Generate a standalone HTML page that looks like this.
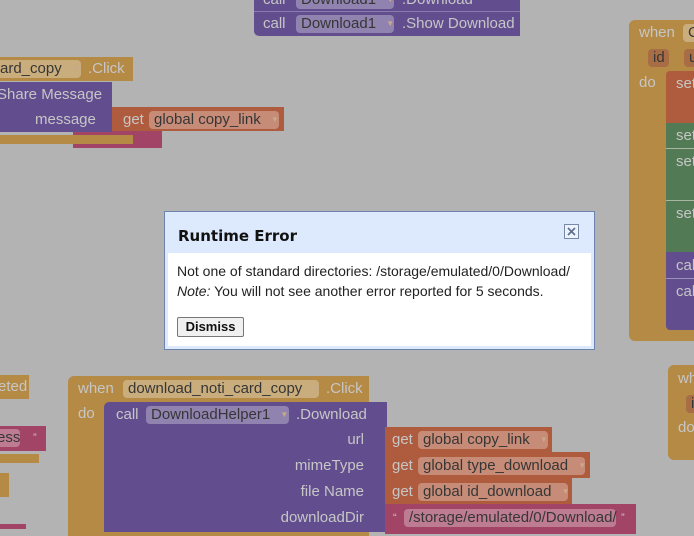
<!DOCTYPE html>
<html><head><meta charset="utf-8"><style>
*{margin:0;padding:0;box-sizing:border-box}
body{width:694px;height:529px;background:#b3b3b3;position:relative;overflow:hidden;font-family:"Liberation Sans",sans-serif;font-size:15px;color:#c6c6c6}
.b{position:absolute}
.g{background:#b48a45}.p{background:#624e8e}.o{background:#ae5b3e}.k{background:#a24465}.n{background:#527a55}
.t{position:absolute;white-space:nowrap;line-height:18px}
.f{position:absolute;background:rgba(255,255,255,.3);border-radius:4px;color:#363636;height:18px;line-height:18px;padding-left:5px;white-space:nowrap}
.f i{font-style:normal;font-size:8px;color:#c9a98a;margin-left:6px;vertical-align:2px}
</style></head><body>
<!-- top purple -->
<div class="b p" style="left:254px;top:0;width:266px;height:36px;border-radius:0 0 0 5px"></div>
<div class="t" style="left:263px;top:-9px">call</div>
<div class="f" style="left:296px;top:-9px;width:98px">Download1 <i>▼</i></div>
<div class="t" style="left:402px;top:-9px">.Download</div>
<div class="b" style="left:254px;top:11px;width:266px;height:1px;background:#8a7cac"></div>
<div class="t" style="left:263px;top:15px">call</div>
<div class="f" style="left:296px;top:15px;width:98px">Download1 <i>▼</i></div>
<div class="t" style="left:402px;top:15px">.Show Download</div>

<!-- left top -->
<div class="b g" style="left:0;top:57px;width:133px;height:24px"></div>
<div class="f" style="left:-5px;top:60px;width:86px">ard_copy <i>▼</i></div>
<div class="t" style="left:88px;top:60px">.Click</div>
<div class="b k" style="left:73px;top:128px;width:89px;height:20px"></div>
<div class="b p" style="left:0;top:82px;width:112px;height:50px"></div>
<div class="t" style="left:-3px;top:86px">Share Message</div>
<div class="t" style="left:35px;top:111px">message</div>
<div class="b o" style="left:112px;top:107px;width:172px;height:24px"></div>
<div class="t" style="left:123px;top:111px">get</div>
<div class="f" style="left:149px;top:111px;width:130px">global copy_link <i>▼</i></div>
<div class="b g" style="left:0;top:135px;width:133px;height:9px"></div>

<!-- right big -->
<div class="b g" style="left:629px;top:20px;width:80px;height:321px;border-radius:6px"></div>
<div class="t" style="left:639px;top:24px">when</div>
<div class="f" style="left:683px;top:24px;width:30px">C</div>
<div class="f" style="left:648px;top:49px;width:21px;background:rgba(160,90,70,.6)">id</div>
<div class="f" style="left:684px;top:49px;width:20px;background:rgba(160,90,70,.6)">u</div>
<div class="t" style="left:639px;top:74px">do</div>
<div class="b o" style="left:666px;top:71px;width:40px;height:52px;border-radius:4px 0 0 0"></div>
<div class="b n" style="left:666px;top:123px;width:40px;height:129px"></div>
<div class="b p" style="left:666px;top:252px;width:40px;height:78px;border-radius:0 0 0 4px"></div>
<div class="b" style="left:666px;top:148px;width:40px;height:1px;background:#a7b7a3"></div>
<div class="b" style="left:666px;top:200px;width:40px;height:1px;background:#a7b7a3"></div>
<div class="b" style="left:666px;top:278px;width:40px;height:1px;background:#9a90b8"></div>
<div class="t" style="left:676px;top:75px">set</div>
<div class="t" style="left:676px;top:127px">set</div>
<div class="t" style="left:676px;top:153px">set</div>
<div class="t" style="left:676px;top:205px">set</div>
<div class="t" style="left:676px;top:257px">cal</div>
<div class="t" style="left:676px;top:283px">cal</div>
<div class="b g" style="left:668px;top:365px;width:40px;height:95px;border-radius:6px"></div>
<div class="t" style="left:678px;top:370px">wh</div>
<div class="f" style="left:686px;top:395px;width:20px;background:rgba(160,90,70,.6)">i</div>
<div class="t" style="left:678px;top:419px">do</div>

<!-- left bottom -->
<div class="b g" style="left:0;top:375px;width:29px;height:24px"></div>
<div class="t" style="left:-2px;top:378px">eted</div>
<div class="b k" style="left:0;top:426px;width:46px;height:25px"></div>
<div class="f" style="left:-8px;top:429px;width:28px">ess</div>
<div class="t" style="left:33px;top:429px;font-size:11px">”</div>
<div class="b g" style="left:0;top:454px;width:39px;height:9px"></div>
<div class="b g" style="left:0;top:473px;width:9px;height:24px"></div>
<div class="b k" style="left:0;top:524px;width:26px;height:5px"></div>

<!-- bottom main -->
<div class="b g" style="left:68px;top:376px;width:301px;height:160px;border-radius:6px 0 0 0"></div>
<div class="t" style="left:78px;top:380px">when</div>
<div class="f" style="left:123px;top:380px;width:196px">download_noti_card_copy <i>▼</i></div>
<div class="t" style="left:326px;top:380px">.Click</div>
<div class="t" style="left:78px;top:405px">do</div>
<div class="b p" style="left:104px;top:402px;width:283px;height:130px;border-radius:5px 0 0 0"></div>
<div class="t" style="left:116px;top:406px">call</div>
<div class="f" style="left:146px;top:406px;width:143px">DownloadHelper1 <i>▼</i></div>
<div class="t" style="left:296px;top:406px">.Download</div>
<div class="t" style="right:330px;top:431px">url</div>
<div class="t" style="right:330px;top:457px">mimeType</div>
<div class="t" style="right:330px;top:483px">file Name</div>
<div class="t" style="right:330px;top:509px">downloadDir</div>
<div class="b o" style="left:385px;top:427px;width:167px;height:25px"></div>
<div class="b o" style="left:385px;top:452px;width:205px;height:26px"></div>
<div class="b o" style="left:385px;top:478px;width:187px;height:26px"></div>
<div class="b k" style="left:385px;top:504px;width:251px;height:30px"></div>
<div class="t" style="left:392px;top:431px">get</div>
<div class="f" style="left:418px;top:431px;width:130px">global copy_link <i>▼</i></div>
<div class="t" style="left:392px;top:457px">get</div>
<div class="f" style="left:418px;top:457px;width:167px">global type_download <i>▼</i></div>
<div class="t" style="left:392px;top:483px">get</div>
<div class="f" style="left:418px;top:483px;width:150px">global id_download <i>▼</i></div>
<div class="t" style="left:393px;top:509px;font-size:11px">“</div>
<div class="f" style="left:404px;top:509px;width:212px">/storage/emulated/0/Download/</div>
<div class="t" style="left:621px;top:509px;font-size:11px">”</div>

<!-- dialog -->
<div class="b" style="left:164px;top:211px;width:431px;height:139px;border:1px solid #6d83ad;background:#dde9fc;padding:3px">
 <div style="background:#fff;height:131px;position:relative">
  <div style="background:#dde9fc;height:38px"></div>
  <div class="t" style="left:10px;top:12px;color:#111;font-size:16px;font-weight:bold;font-family:'DejaVu Sans','Liberation Sans',sans-serif;font-size:15px">Runtime Error</div>
  <div class="b" style="left:396px;top:9px;width:15px;height:15px;border:1px solid #7788aa;background:#eef3fb"><svg width="13" height="13" style="position:absolute;left:0;top:0"><path d="M3 3L10 10M10 3L3 10" stroke="#5a6c90" stroke-width="1.6"/></svg></div>
  <div class="t" style="left:9px;top:47px;color:#222;font-size:14px">Not one of standard directories: /storage/emulated/0/Download/</div>
  <div class="t" style="left:9px;top:67px;color:#222;font-size:14px"><i>Note:</i> You will not see another error reported for 5 seconds.</div>
  <div class="b" style="left:9px;top:102px;width:67px;height:20px;border:1px solid #777;border-radius:2px;background:#f0f0f0;color:#111;font-weight:bold;font-size:13px;text-align:center;line-height:18px">Dismiss</div>
 </div>
</div>
</body></html>
